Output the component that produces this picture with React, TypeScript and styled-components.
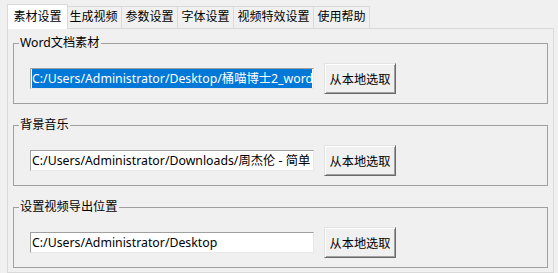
import styled, { createGlobalStyle } from "styled-components";

const GlobalStyle = createGlobalStyle`
  html, body {
    margin: 0;
    background: #f0f0f0;
  }
  body {
    font-family: "Noto Sans", "Noto Sans CJK SC", sans-serif;
    font-size: 12px;
    color: #000;
  }
`;

const Window = styled.div`
  width: 558px;
  height: 273px;
  box-sizing: border-box;
  padding: 4px 4px 0 7px;
  display: flex;
  flex-direction: column;
  overflow: hidden;
`;

const TabBar = styled.div`
  display: flex;
  align-items: flex-end;
  height: 24px;
  padding-left: 2px;
`;

const Tab = styled.div<{ $active?: boolean }>`
  position: relative;
  box-sizing: border-box;
  height: ${({ $active }) => ($active ? "25px" : "22px")};
  margin: ${({ $active }) => ($active ? "0 -2px -1px -2px" : "0")};
  padding: ${({ $active }) => ($active ? "3px 5.5px 0" : "1px 3.5px 0")};
  border: 1px solid #d9d9d9;
  border-bottom: none;
  background: ${({ $active }) => ($active ? "#fff" : "#f0f0f0")};
  z-index: ${({ $active }) => ($active ? 1 : 0)};
  line-height: 18px;
  font-size: 12px;
  white-space: nowrap;

  & + & {
    margin-left: ${({ $active }) => ($active ? "-3px" : "-1px")};
  }
`;

const Pane = styled.div`
  flex: 1;
  border: 1px solid #d9d9d9;
  padding: 6px 5px 0 5px;
  display: flex;
  flex-direction: column;
  gap: 13px;
`;

const GroupBox = styled.fieldset`
  margin: 0;
  padding: 0;
  border: 1px solid #a0a0a0;
  min-width: 0;
`;

const GroupTitle = styled.legend`
  margin-left: 5px;
  padding: 0 1px;
  font-size: 12.2px;
  line-height: 16px;
`;

const Row = styled.div`
  display: flex;
  align-items: center;
  gap: 10px;
  padding: 12px 0 9px 16px;
`;

const LineEdit = styled.div`
  box-sizing: border-box;
  width: 284px;
  height: 21px;
  padding: 0 1px;
  background: #fff;
  border: 1px solid;
  border-color: #a0a0a0 #e8e8e8 #e8e8e8 #a0a0a0;
  overflow: hidden;
  white-space: nowrap;
  line-height: 19px;
  font-size: 12.3px;
`;

const Selected = styled.span`
  background: #0078d7;
  color: #fff;
  display: inline-block;
  width: 100%;
  height: 19px;
`;

const Button = styled.button`
  box-sizing: border-box;
  width: 72px;
  height: 31px;
  padding: 0;
  font: inherit;
  font-size: 12.2px;
  color: #000;
  background: #f0f0f0;
  border: 1px solid;
  border-color: #e3e3e3 #696969 #696969 #e3e3e3;
  box-shadow: inset 1px 1px 0 #fff, inset -1px -1px 0 #a0a0a0;
`;

const tabs = ["素材设置", "生成视频", "参数设置", "字体设置", "视频特效设置", "使用帮助"];

const groups = [
  {
    title: "Word文档素材",
    path: "C:/Users/Administrator/Desktop/桶喵博士2_word",
    selected: true,
  },
  {
    title: "背景音乐",
    path: "C:/Users/Administrator/Downloads/周杰伦 - 简单",
    selected: false,
  },
  {
    title: "设置视频导出位置",
    path: "C:/Users/Administrator/Desktop",
    selected: false,
  },
];

export default function App() {
  return (
    <>
      <GlobalStyle />
      <Window>
        <TabBar>
          {tabs.map((t, i) => (
            <Tab key={t} $active={i === 0}>
              {t}
            </Tab>
          ))}
        </TabBar>
        <Pane>
          {groups.map((g) => (
            <GroupBox key={g.title}>
              <GroupTitle>{g.title}</GroupTitle>
              <Row>
                <LineEdit>
                  {g.selected ? <Selected>{g.path}</Selected> : g.path}
                </LineEdit>
                <Button>从本地选取</Button>
              </Row>
            </GroupBox>
          ))}
        </Pane>
      </Window>
    </>
  );
}
